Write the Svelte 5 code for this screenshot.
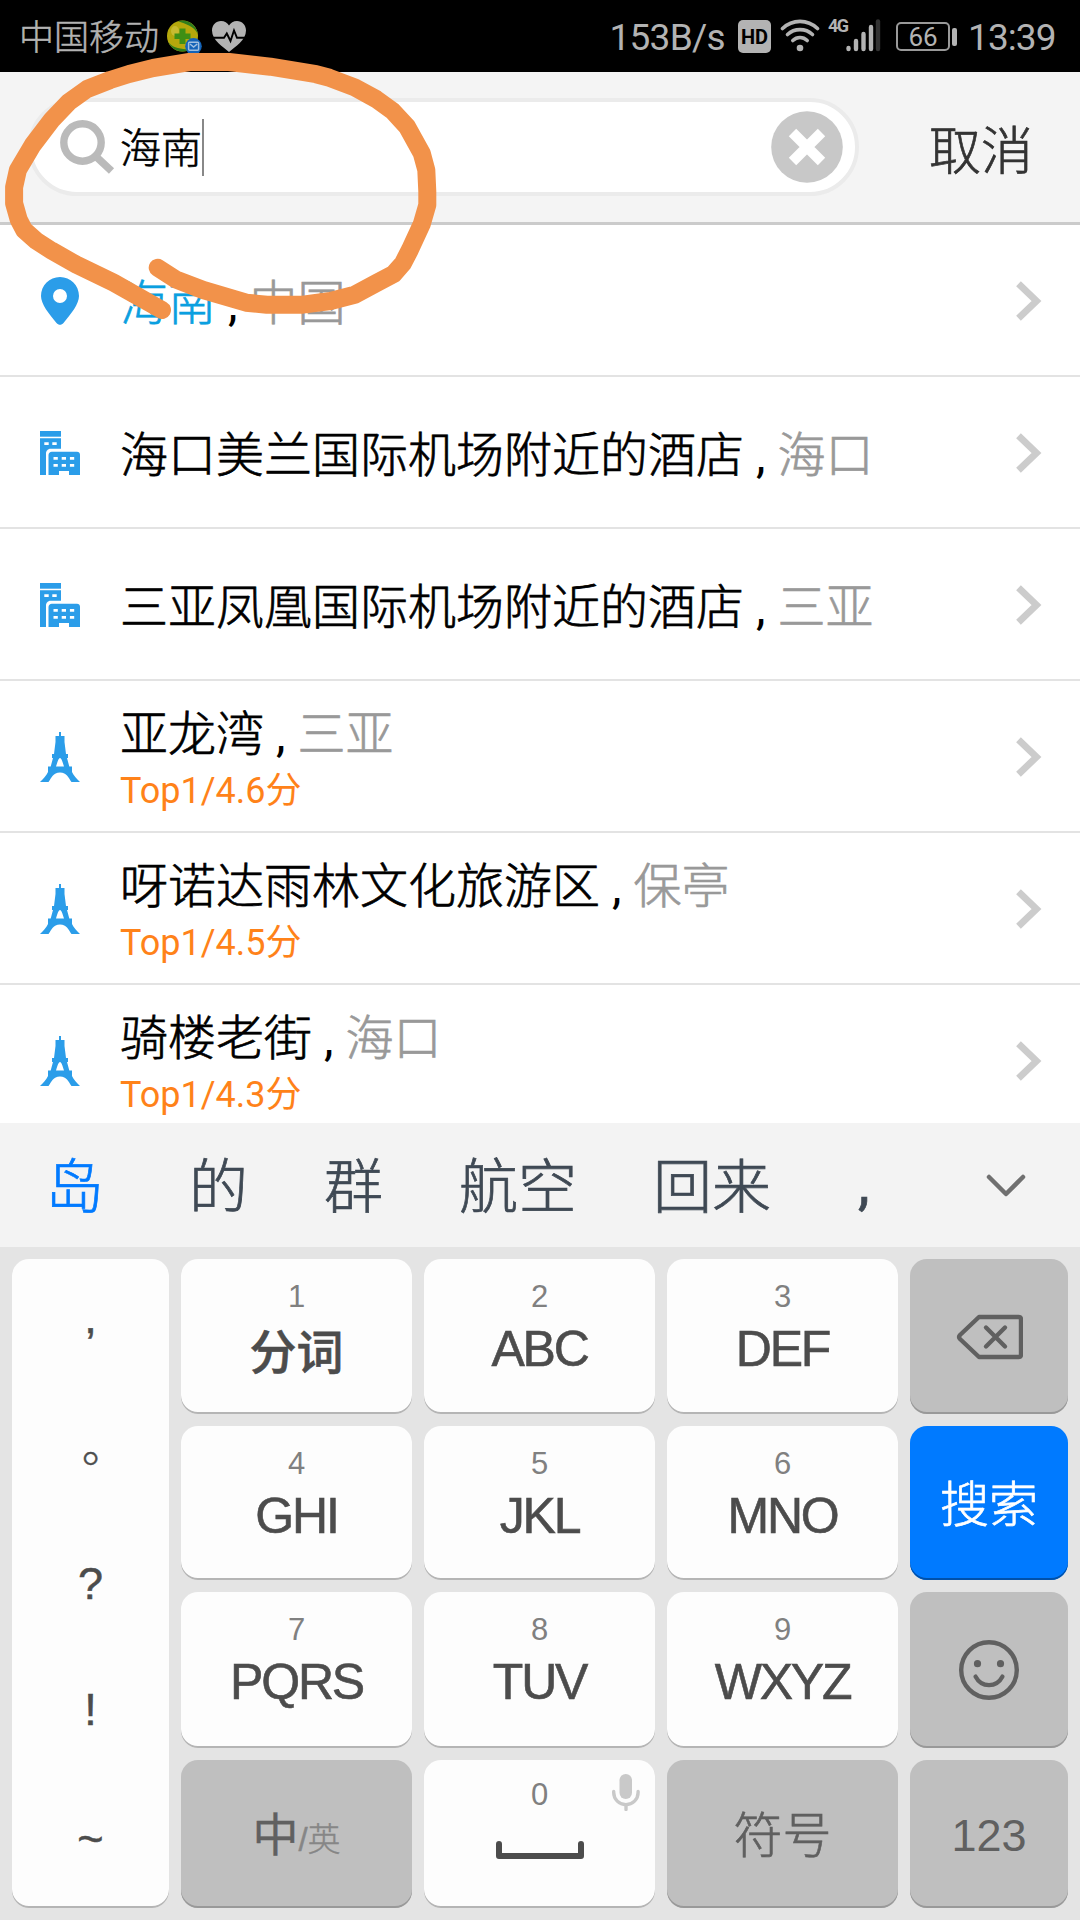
<script>
	const results = [
		{ icon: 'pin', name: '海南', city: '中国', match: true },
		{ icon: 'hotel', name: '海口美兰国际机场附近的酒店', city: '海口' },
		{ icon: 'hotel', name: '三亚凤凰国际机场附近的酒店', city: '三亚' },
		{ icon: 'tower', name: '亚龙湾', city: '三亚', score: 'Top1/4.6分' },
		{ icon: 'tower', name: '呀诺达雨林文化旅游区', city: '保亭', score: 'Top1/4.5分' },
		{ icon: 'tower', name: '骑楼老街', city: '海口', score: 'Top1/4.3分' }
	];

	const candidates = ['岛', '的', '群', '航空', '回来', ','];
	const punctuation = [',', '。', '?', '!', '~'];

	const keys = [
		{ digit: '1', label: '分词', cjk: true },
		{ digit: '2', label: 'ABC' },
		{ digit: '3', label: 'DEF' },
		{ action: 'delete' },
		{ digit: '4', label: 'GHI' },
		{ digit: '5', label: 'JKL' },
		{ digit: '6', label: 'MNO' },
		{ action: 'search' },
		{ digit: '7', label: 'PQRS' },
		{ digit: '8', label: 'TUV' },
		{ digit: '9', label: 'WXYZ' },
		{ action: 'emoji' },
		{ action: 'lang' },
		{ action: 'space' },
		{ action: 'symbols' },
		{ action: 'numbers' }
	];

	let query = $state('海南');
</script>

<div class="screen">
	<div class="status">
		<span class="carrier">中国移动</span>
		<svg class="guard" width="36" height="36" viewBox="0 0 36 36">
			<circle cx="16.500" cy="17" r="15.500" fill="#b5a80c" />
			<path d="M12 2.200A15.500 15.500 0 0 1 31.800 15C28 7 20 5 12 2.200z" fill="#2f7d1c" />
			<path d="M2.500 23.500C8 30 15 29 23 31A15.500 15.500 0 0 1 2.500 23.500z" fill="#2f7d1c" />
			<ellipse cx="9" cy="12" rx="4" ry="5" fill="#c8bb30" />
			<path d="M13.500 9.500h6v5h5v5.500h-5v5h-6v-5h-5v-5.500h5z" fill="#3f8f14" />
			<circle cx="27.500" cy="27.300" r="8.300" fill="#1463b8" />
			<rect x="22.600" y="23.200" width="10" height="8" rx="1" fill="none" stroke="#9fbfe0" stroke-width="1.500" />
			<path d="M24 25l3.600 3 3.600-3" fill="none" stroke="#9fbfe0" stroke-width="1.500" />
		</svg>
		<svg class="heart" width="34" height="31" viewBox="0 0 34 31">
			<path
				d="M17 31C11 26 0 19 0 9.500 0 4 4 0 9 0c3.500 0 6.500 1.800 8 4.500C18.500 1.800 21.500 0 25 0c5 0 9 4 9 9.500C34 19 23 26 17 31z"
				fill="#b3b3b3"
			/>
			<path
				d="M0 16.800h12l2.800-4.300 3.700 7.500 3.500-10.500 3 7.300h9"
				fill="none"
				stroke="#000"
				stroke-width="1.900"
			/>
		</svg>
		<span class="speed">153B/s</span>
		<span class="hd">HD</span>
		<svg class="wifi" width="40" height="34" viewBox="0 0 40 34">
			<g fill="none" stroke="#b3b3b3" stroke-width="3.600" stroke-linecap="round">
				<path d="M2.500 9.500C12.500 0 27.500 0 37.500 9.500" />
				<path d="M7.500 15.500C14.500 9 25.500 9 32.500 15.500" />
				<path d="M12.800 21.500C17 17.500 23 17.500 27.200 21.500" />
			</g>
			<circle cx="20" cy="29" r="3.300" fill="#b3b3b3" />
		</svg>
		<span class="net">4G</span>
		<svg class="signal" width="35" height="34" viewBox="0 0 35 34">
			<g stroke="#b3b3b3" stroke-width="4.400" stroke-linecap="round">
				<path d="M2.500 29v1" />
				<path d="M10 22v8" />
				<path d="M17.500 15v15" />
				<path d="M25 8v22" />
				<path d="M32 2.500v27.500" stroke="#333" />
			</g>
		</svg>
		<span class="battery">66</span>
		<span class="clock">13:39</span>
	</div>

	<header>
		<div class="search-box">
			<svg class="glass" width="56" height="56" viewBox="0 0 56 56">
				<circle cx="23.500" cy="23.500" r="18.700" fill="none" stroke="#bababa" stroke-width="7.400" />
				<path d="M37 37.500l15.500 14.500" stroke="#bababa" stroke-width="7.500" />
			</svg>
			<span class="query">{query}</span>
			<i class="caret"></i>
			<svg class="clear" width="72" height="72" viewBox="0 0 72 72">
				<circle cx="36" cy="36" r="35.800" fill="#c8c8c8" />
				<path d="M21.500 21.500l29 29M50.500 21.500l-29 29" stroke="#fff" stroke-width="10.500" />
			</svg>
		</div>
		<span class="cancel">取消</span>
	</header>

	<ul class="results">
		{#each results as item, i (i)}
			<li>
				<div class="kind">
					{#if item.icon === 'pin'}
						<svg width="38" height="48" viewBox="0 0 38 48">
							<path
								d="M19 0C8.500 0 0 8.500 0 19c0 8 8 18 15.500 27 2 2.400 5 2.400 7 0C30 37 38 27 38 19 38 8.500 29.500 0 19 0zm0 12a7 7 0 1 1 0 14 7 7 0 0 1 0-14z"
								fill="#2b9de9"
							/>
						</svg>
					{:else if item.icon === 'hotel'}
						<svg width="40" height="44" viewBox="0 0 40 44">
							<g fill="#2b9de9">
								<path d="M0 0h21v5.700H0z" />
								<path
									fill-rule="evenodd"
									d="M0 7.200h21v10.600H10.500C8 17.800 6 20 6 22.500V44H0zM4.300 11.200v2.700h4.400v-2.700zM12.300 11.200v2.700h4.400v-2.700z"
								/>
								<path
									fill-rule="evenodd"
									d="M8.500 44V24c0-2 1.500-3.300 3.300-3.300H37c1.800 0 3 1.300 3 3V44H29v-4H19v4zM13.500 26v2.700h4.300V26zm8.200 0v2.700H26V26zm8.200 0v2.700h4.300V26zM13.500 33v2.700h4.300V33zm8.200 0v2.700H26V33zm8.200 0v2.700h4.300V33z"
								/>
							</g>
						</svg>
					{:else}
						<svg width="40" height="50" viewBox="0 0 40 50">
							<path
								fill-rule="evenodd"
								d="M19 0h2v4h3.500v6L26 22h2v4h-1l2.300 8.500h2.700V40c1.500 3.500 4.500 6.500 8 10h-8.500c-3-4-4.500-9.500-11.500-9.500S11.500 46 8.500 50H0c3.500-3.500 6.500-6.500 8-10v-5.500h2.700L13 26h-1v-4h2l1.500-12V4H19zm1 26c-1.500 0-2.600 4-4 8.500h8C22.600 30 21.500 26 20 26z"
								fill="#2b9de9"
							/>
						</svg>
					{/if}
				</div>
				<div class="info">
					<div class="title">
						<span class:match={item.match}>{item.name}</span><span class="sep">,</span><span class="city">{item.city}</span>
					</div>
					{#if item.score}
						<div class="score">{item.score}</div>
					{/if}
				</div>
				<svg class="arrow" width="28" height="40" viewBox="0 0 28 40">
					<path d="M3.500 2.800L21.500 20 3.500 37.200" fill="none" stroke="#ccc" stroke-width="6.800" />
				</svg>
			</li>
		{/each}
	</ul>

	<div class="candidates">
		{#each candidates as word, i (word)}
			<span class:first={i === 0}>{word}</span>
		{/each}
		<svg width="42" height="26" viewBox="0 0 42 26">
			<path
				d="M4 5l17 17L38 5"
				fill="none"
				stroke="#707070"
				stroke-width="4.500"
				stroke-linecap="round"
				stroke-linejoin="round"
			/>
		</svg>
	</div>

	<div class="keyboard">
		<div class="key side">
			{#each punctuation as mark (mark)}
				<span>{mark}</span>
			{/each}
		</div>
		{#each keys as key, i (i)}
			{#if key.digit}
				<div class="key">
					<span class="digit">{key.digit}</span>
					<span class="letters" class:cjk={key.cjk}>{key.label}</span>
				</div>
			{:else if key.action === 'delete'}
				<div class="key gray center">
					<svg width="68" height="46" viewBox="0 0 68 46">
						<g fill="none" stroke="#606060" stroke-width="4.400" stroke-linecap="round" stroke-linejoin="round">
							<path d="M24 3h39.500c1.500 0 2.500 1 2.500 2.500v35c0 1.500-1 2.500-2.500 2.500H24L5 25q-1.800-2 0-4z" />
							<path d="M31 13.500l19 19M50 13.500l-19 19" />
						</g>
					</svg>
				</div>
			{:else if key.action === 'search'}
				<div class="key blue center">搜索</div>
			{:else if key.action === 'emoji'}
				<div class="key gray center">
					<svg width="60" height="60" viewBox="0 0 60 60">
						<circle cx="30" cy="30" r="27.800" fill="none" stroke="#606060" stroke-width="4.400" />
						<circle cx="18.500" cy="23.700" r="3.600" fill="#606060" />
						<circle cx="41.500" cy="23.700" r="3.600" fill="#606060" />
						<path d="M16.500 36.500c6 11.500 21 11.500 27 0" fill="none" stroke="#606060" stroke-width="4.200" stroke-linecap="round" />
					</svg>
				</div>
			{:else if key.action === 'lang'}
				<div class="key gray lang"><b>中</b><span>/英</span></div>
			{:else if key.action === 'space'}
				<div class="key space">
					<span class="digit">0</span>
					<svg class="bar" width="88" height="18" viewBox="0 0 88 18">
						<path d="M3 3v12h82V3" fill="none" stroke="#4c4c4c" stroke-width="6" stroke-linecap="round" stroke-linejoin="round" />
					</svg>
					<svg class="mic" width="28" height="37" viewBox="0 0 28 37">
						<rect x="7.500" y="0" width="12.500" height="25" rx="6.200" fill="#c9c9c9" />
						<path d="M1.700 17.500v1a12.200 12.200 0 0 0 24.400 0v-1M14 31v4.500" fill="none" stroke="#c9c9c9" stroke-width="3.400" stroke-linecap="round" />
					</svg>
				</div>
			{:else if key.action === 'symbols'}
				<div class="key gray center symbols">符号</div>
			{:else}
				<div class="key gray center numbers">123</div>
			{/if}
		{/each}
	</div>

	<!-- hand-drawn marker stroke over the search field -->
	<svg class="marker" width="450" height="330" viewBox="0 0 450 330">
		<path
			d="M157.700 267.700L175.600 279.300 203.200 290 246.200 302.700 266.900 304.700 303 304.700 330.600 301 354.700 294.700 377 282.700 393.600 274 402.900 263.300 409.800 250 421.800 224 427.300 205 427.300 191.700 426.300 170 421.800 153.300 407 126.700 392.600 111 376 99 354.700 87.300 329.500 77.800 316.100 74.200 270.300 66.700 229 62 189.400 62 153.200 68 129.100 74 110.200 80 87.100 89 68.900 102 51.700 120 32.700 145 17.900 170 14.100 187.300 14.100 203.300 18.600 219.300 24.100 230 36.200 240.700 51.700 250.700 76.400 264.700 113.600 282.700 162 310"
			fill="none"
			stroke="#f2924a"
			stroke-width="18"
			stroke-linecap="round"
			stroke-linejoin="round"
		/>
	</svg>
</div>

<style>
	:global(body) {
		background: #fff;
	}

	.screen {
		position: relative;
		width: 1080px;
		height: 1920px;
		overflow: hidden;
		display: flex;
		flex-direction: column;
		font-family: Roboto, 'Noto Sans CJK SC', sans-serif;
		font-weight: 300;
	}

	.screen svg {
		display: block;
		flex-shrink: 0;
	}

	.status {
		height: 72px;
		display: flex;
		align-items: center;
		background: #000;
		color: #b3b3b3;
		font-size: 37px;
		font-weight: 400;
	}

	.carrier {
		width: 147px;
		padding: 5px 0 0 19px;
		font-size: 35px;
		font-weight: 300;
		line-height: 67px;
		-webkit-text-stroke: 0.5px;
	}

	.guard {
		margin: 2px 10px 0 0;
	}

	.speed {
		margin-left: auto;
		padding-top: 3px;
		letter-spacing: -0.7px;
	}

	.hd {
		width: 33px;
		height: 33px;
		margin-left: 13px;
		border-radius: 5px;
		background: #b3b3b3;
		color: #000;
		font-size: 20px;
		font-weight: 700;
		line-height: 34px;
		text-align: center;
	}

	.wifi {
		margin-left: 9px;
	}

	.net {
		width: 19px;
		margin: -20px 0 0 8px;
		font-size: 18px;
		font-weight: 700;
		letter-spacing: -1.5px;
		line-height: 20px;
	}

	.signal {
		margin-left: -1px;
	}

	.battery {
		position: relative;
		width: 50px;
		height: 25px;
		margin-left: 15px;
		border: 2px solid #999;
		border-radius: 5px;
		font-size: 26px;
		line-height: 27px;
		text-align: center;
	}

	.battery::after {
		content: '';
		position: absolute;
		top: 4px;
		right: -9px;
		width: 5px;
		height: 18px;
		border-radius: 2px;
		background: #b3b3b3;
	}

	.clock {
		width: 88px;
		margin: 0 24px 0 18px;
		padding-top: 3px;
		letter-spacing: -0.9px;
	}

	header {
		box-sizing: border-box;
		height: 153px;
		display: flex;
		align-items: center;
		border-bottom: 3px solid #cbcbcb;
		background: #f4f4f4;
	}

	.search-box {
		box-sizing: border-box;
		width: 831px;
		height: 98px;
		margin-left: 28px;
		padding: 0 12px 0 27px;
		display: flex;
		align-items: center;
		border: 4px solid #ebebeb;
		border-radius: 49px;
		background: #fff;
	}

	.query {
		margin-left: 5px;
		padding-top: 4px;
		color: #000;
		font-size: 41px;
		line-height: 60px;
		-webkit-text-stroke: 0.6px;
	}

	.caret {
		width: 2px;
		height: 57px;
		background: #888;
	}

	.clear {
		margin-left: auto;
	}

	.cancel {
		margin-left: 70px;
		color: #333;
		font-size: 52px;
		-webkit-text-stroke: 0.7px;
	}

	.results {
		height: 898px;
		margin: 0;
		padding: 0;
		overflow: hidden;
		list-style: none;
		background: #fff;
	}

	.results li {
		height: 150px;
		display: flex;
		align-items: center;
		border-bottom: 2px solid #e3e3e3;
	}

	.kind {
		width: 120px;
		padding-top: 1px;
		display: flex;
		justify-content: center;
	}

	.info {
		flex: 1;
		padding-top: 8px;
	}

	.title {
		color: #000;
		font-size: 48px;
		line-height: 62px;
		-webkit-text-stroke: 0.7px;
	}

	.match {
		color: #0a9fe0;
	}

	.sep {
		padding: 0 12px;
		font-weight: 400;
		-webkit-text-stroke: 0;
	}

	.city {
		color: #999;
	}

	.score {
		color: #ff8219;
		font-size: 36px;
		font-weight: 400;
		line-height: 51px;
	}

	.arrow {
		margin: 2px 37px 0 0;
	}

	.candidates {
		height: 124px;
		display: flex;
		align-items: center;
		gap: 76px;
		padding-left: 45px;
		background: #f3f3f3;
		color: #3f4954;
		font-size: 59px;
		-webkit-text-stroke: 0.7px;
	}

	.candidates span {
		padding-bottom: 5px;
	}

	.candidates span:nth-last-of-type(1) {
		margin-left: 11px;
		font-weight: 400;
	}

	.candidates .first {
		margin-right: 9px;
		color: #007aff;
	}

	.candidates svg {
		margin: 0 53px 0 auto;
	}

	.keyboard {
		flex: 1;
		display: grid;
		grid-template-columns: 157px 231px 231px 231px 158px;
		grid-template-rows: 155px 154px 156px 148px;
		gap: 12px;
		padding: 12px 12px 0;
		background: #e4e4e4;
		color: #4c4c4c;
		font-family: 'Liberation Sans', 'Noto Sans CJK SC', sans-serif;
	}

	.key {
		display: flex;
		flex-direction: column;
		align-items: center;
		border-radius: 17px;
		background: #fdfdfd;
		box-shadow: inset 0 -2px #b5b5b5;
	}

	.side {
		grid-row: 1 / 5;
		padding-top: 13px;
		font-family: 'Liberation Sans', 'Noto Sans CJK TC', sans-serif;
		font-size: 45px;
		-webkit-text-stroke: 0.5px;
	}

	.side span {
		height: 126px;
		line-height: 126px;
	}

	.side span:first-child {
		line-height: 92px;
	}

	.side span:nth-child(3),
	.side span:nth-child(4) {
		line-height: 119px;
	}

	.digit {
		height: 32px;
		margin-top: 22px;
		color: #808080;
		font-size: 31px;
		line-height: 32px;
	}

	.letters {
		margin-top: 8px;
		font-size: 50px;
		letter-spacing: -2.2px;
		line-height: 56px;
		-webkit-text-stroke: 0.6px;
	}

	.cjk {
		margin-top: 12px;
		font-size: 47px;
		font-weight: 500;
		letter-spacing: 0;
	}

	.gray {
		background: #bfbfbf;
		box-shadow: inset 0 -2px #999;
		color: #606060;
	}

	.blue {
		background: #007aff;
		box-shadow: inset 0 -2px #0051aa;
		color: #fff;
		-webkit-text-stroke: 0.7px;
	}

	.center {
		justify-content: center;
		font-size: 49px;
	}

	.blue,
	.symbols {
		padding-bottom: 6px;
	}

	.symbols {
		-webkit-text-stroke: 0.6px;
	}

	.lang {
		flex-direction: row;
		align-items: baseline;
		justify-content: center;
		font-size: 33px;
		line-height: 150px;
		color: #868686;
		-webkit-text-stroke: 0.4px;
	}

	.lang b {
		color: #606060;
		font-size: 46px;
		font-weight: 400;
	}

	.space {
		position: relative;
	}

	.space .digit {
		margin-top: 19px;
	}

	.bar {
		margin-top: 30px;
	}

	.mic {
		position: absolute;
		top: 14px;
		right: 15px;
	}

	.numbers {
		padding-top: 3px;
		font-size: 45px;
	}

	/* every key keeps its grid size whatever padding it carries */
	.key {
		box-sizing: border-box;
	}

	.marker {
		position: absolute;
		top: 0;
		left: 0;
	}
</style>
